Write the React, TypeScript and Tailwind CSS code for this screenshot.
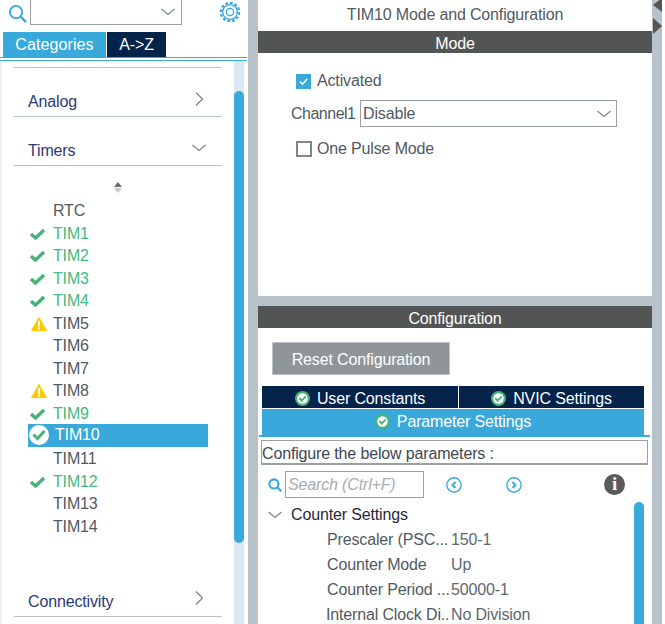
const GRAY = 'bg-[#b7c2c9]';

function Chevron({ dir = 'down' }: { dir?: 'down' | 'right' }) {
  return (
    <svg viewBox="0 0 14 14" className="w-[14px] h-[14px] shrink-0" fill="none" stroke="#7d868c" strokeWidth="1.3">
      {dir === 'down' ? <path d="M0.5 4 L7 9.5 L13.5 4" /> : <path d="M4 0.5 L10.5 7 L4 13.5" />}
    </svg>
  );
}

function Check() {
  return (
    <svg viewBox="0 0 15 12" className="w-[15px] h-[12px]">
      <path d="M1 6 L5.5 10 L14 2" fill="none" stroke="#48b27a" strokeWidth="3.4" />
    </svg>
  );
}

function Warn() {
  return (
    <svg viewBox="0 0 16 14" className="w-4 h-[14px] ml-[1px]">
      <path d="M8 0.5 L15.5 13.5 L0.5 13.5 Z" fill="#ffcc00" stroke="#ffcc00" strokeLinejoin="round" />
      <rect x="7" y="4" width="2" height="5.5" fill="#fff" />
      <rect x="7" y="10.5" width="2" height="2" fill="#fff" />
    </svg>
  );
}

function TabCheck() {
  return (
    <svg viewBox="0 0 16 16" className="w-[15px] h-[15px] shrink-0">
      <circle cx="8" cy="8" r="8" fill="#48b27a" />
      <circle cx="8" cy="8" r="5.6" fill="#fff" />
      <path d="M4.5 7.5 L7.2 10.2 L11.5 5.8" fill="none" stroke="#48b27a" strokeWidth="2" />
    </svg>
  );
}

type Status = 'ok' | 'warn' | 'none';
const timers: { name: string; status: Status }[] = [
  { name: 'RTC', status: 'none' },
  { name: 'TIM1', status: 'ok' },
  { name: 'TIM2', status: 'ok' },
  { name: 'TIM3', status: 'ok' },
  { name: 'TIM4', status: 'ok' },
  { name: 'TIM5', status: 'warn' },
  { name: 'TIM6', status: 'none' },
  { name: 'TIM7', status: 'none' },
  { name: 'TIM8', status: 'warn' },
  { name: 'TIM9', status: 'ok' },
];

function TimerRow({ name, status }: { name: string; status: Status }) {
  return (
    <div className="flex items-center h-[22.5px]">
      <div className="w-[39px] pl-[16px] flex items-center shrink-0">
        {status === 'ok' && <Check />}
        {status === 'warn' && <Warn />}
      </div>
      <span className={status === 'ok' ? 'text-[#45b981]' : 'text-[#4f5a63]'}>{name}</span>
    </div>
  );
}

function Category({ label, open }: { label: string; open?: boolean }) {
  return (
    <div className="flex items-center justify-between h-[25px] w-[208px] border-b border-[#b7c2c9] pl-[14px] pr-[16px] pb-[4px] text-[#2b3a75]">
      <span>{label}</span>
      <div className="mb-[7px]">
        <Chevron dir={open ? 'down' : 'right'} />
      </div>
    </div>
  );
}

function Param({ label, value, tight }: { label: string; value: string; tight?: boolean }) {
  return (
    <div className="flex items-center h-[25px] text-[#4f5a63]">
      <span className={`w-[190px] whitespace-nowrap ${tight ? 'pl-[65px]' : 'pl-[66px]'}`}>{label}</span>
      <span className="text-[#5e6870] whitespace-nowrap">{value}</span>
    </div>
  );
}

export default function App() {
  return (
    <div className="w-[665px] h-[624px] flex overflow-hidden bg-white font-['Liberation_Sans',Arial,sans-serif] text-[16px] tracking-[-0.15px]">
      {/* left panel */}
      <div className="w-[248px] h-full bg-white flex flex-col shrink-0">
        <div className="flex items-start h-[32px] pl-[8px]">
          <svg viewBox="0 0 20 20" className="w-[19px] h-[19px] mt-[4px]">
            <circle cx="8.5" cy="8.5" r="6.5" fill="none" stroke="#39a9dc" strokeWidth="2" />
            <path d="M13.5 13.5 L19 19" stroke="#39a9dc" strokeWidth="2.5" />
          </svg>
          <div className="w-[152px] h-[26px] ml-[3px] -mt-px border border-[#9aa1a6] flex items-center justify-end pr-[6px]">
            <Chevron />
          </div>
          <svg viewBox="0 0 24 24" className="w-[22px] h-[22px] ml-[37px] mt-[1px]" fill="none" stroke="#39a9dc">
            <circle cx="12" cy="12" r="4" strokeWidth="1.5" />
            <circle cx="12" cy="12" r="8" strokeWidth="1.5" />
            <circle cx="12" cy="12" r="10" strokeWidth="2.5" strokeDasharray="3 2.2" />
          </svg>
        </div>
        <div className="flex h-[25px] pl-[3px] gap-px">
          <div className="w-[103px] bg-[#39a9dc] text-white flex items-center justify-center tracking-[0.1px]">Categories</div>
          <div className="w-[59px] bg-[#03234b] text-white flex items-center justify-center">A-&gt;Z</div>
        </div>
        <div className="h-[4px] border-y border-[#39a9dc] mr-[1px] bg-white" />
        <div className="flex-1 flex min-h-0">
          <div className="w-[2px] bg-[#f0f0f0]" />
          <div className="w-[232px] pl-[12px] flex flex-col pt-[6px]">
            <div className="h-px bg-[#b7c2c9] w-[208px]" />
            <div className="mt-[24px]"><Category label="Analog" /></div>
            <div className="mt-[24px]"><Category label="Timers" open /></div>
            <div className="h-[33.8px] w-[208px] flex flex-col items-center pt-[16px] gap-[1px]">
              <div className="w-0 h-0 border-x-[4px] border-x-transparent border-b-[5px] border-b-[#6a6a6a]" />
              <div className="w-0 h-0 border-x-[4px] border-x-transparent border-t-[5px] border-t-[#c8c8c8]" />
            </div>
            <div className="flex flex-col">
              {timers.map((t) => (
                <TimerRow key={t.name} name={t.name} status={t.status} />
              ))}
              <div className="flex items-center h-[23px] w-[180px] ml-[14px] -mt-[1px] mb-[1px] bg-[#39a9dc] text-white">
                <svg viewBox="0 0 20 20" className="w-[20px] h-[20px] ml-[1px] mr-[6px] shrink-0">
                  <circle cx="10" cy="10" r="10" fill="#fff" />
                  <path d="M4.5 9.5 L8.5 13.5 L15.5 6" fill="none" stroke="#48b27a" strokeWidth="3" />
                </svg>
                <span>TIM10</span>
              </div>
              <TimerRow name="TIM11" status="none" />
              <TimerRow name="TIM12" status="ok" />
              <TimerRow name="TIM13" status="none" />
              <TimerRow name="TIM14" status="none" />
            </div>
            <div className="mt-[54.2px]"><Category label="Connectivity" /></div>
          </div>
          <div className="w-[10px] bg-[#d8e8f5] flex flex-col">
            <div className="mt-[30px] h-[452px] bg-[#39a9dc] rounded-full" />
          </div>
        </div>
      </div>

      <div className={`w-[10px] h-full shrink-0 ${GRAY}`} />

      {/* right panel */}
      <div className={`w-[394px] flex flex-col shrink-0 ${GRAY}`}>
        <div className="h-[296px] bg-white text-[#4f5a63]">
          <div className="h-[31px] flex items-center justify-center pb-[2px]">TIM10 Mode and Configuration</div>
          <div className="h-[22px] bg-[#535554] text-white flex items-center justify-center pt-[3px]">Mode</div>
          <div className="pl-[33px] pt-[18px] flex flex-col">
            <label className="flex items-center gap-[6px] h-[20px] pl-[5px]">
              <span className="w-[15px] h-[15px] bg-[#39a9dc] flex items-center justify-center">
                <svg viewBox="0 0 12 12" className="w-[11px] h-[11px]"><path d="M2 6 L5 9 L10 3" fill="none" stroke="#fff" strokeWidth="1.6" /></svg>
              </span>
              Activated
            </label>
            <div className="flex items-center mt-[9px]">
              <span className="w-[69px] pt-[1px] tracking-[-0.5px]">Channel1</span>
              <div className="w-[257px] h-[27px] border border-[#9aa1a6] flex items-center justify-between pl-[2px] pr-[5px] pt-[1px]">
                Disable
                <Chevron />
              </div>
            </div>
            <label className="flex items-center gap-[5px] h-[20px] pl-[5px] mt-[12px]">
              <span className="w-[16px] h-[16px] border-2 border-[#7d868c] bg-white" />
              One Pulse Mode
            </label>
          </div>
        </div>
        <div className="h-[10px] shrink-0" />
        <div className="flex-1 bg-white flex flex-col text-[#4f5a63] min-h-0">
          <div className="h-[22px] bg-[#535554] text-white flex items-center justify-center shrink-0 pt-[3px]">Configuration</div>
          <div className="pl-[14px] pt-[14px] shrink-0">
            <div className="w-[178px] h-[33px] bg-[#90959a] border border-[#b7c2c9] text-white flex items-center justify-center pt-[2px]">Reset Configuration</div>
          </div>
          <div className="mx-[4px] mt-[11px] w-[382px] shrink-0">
            <div className="flex h-[22px] gap-px">
              <div className="w-[196px] bg-[#03234b] text-white flex items-center justify-center gap-[7px] pt-[3px]"><TabCheck />User Constants</div>
              <div className="flex-1 bg-[#03234b] text-white flex items-center justify-center gap-[7px] pt-[3px]"><TabCheck />NVIC Settings</div>
            </div>
            <div className="h-[27px] mt-px bg-[#39a9dc] text-white flex items-center justify-center gap-[7px] pb-[2px]"><TabCheck />Parameter Settings</div>
          </div>
          <div className="ml-[1px] w-[391px] h-[2px] bg-[#39a9dc] -mt-[1px] shrink-0" />
          <div className="flex-1 flex flex-col min-h-0 ml-[3px] mr-[4px]">
            <div className="h-[25px] mt-[3px] border border-[#9aa1a6] border-b-2 flex items-center pt-[3px] text-[#3d4850] shrink-0">Configure the below parameters :</div>
            <div className="flex items-center h-[33px] mt-[3px] pl-[7px] shrink-0">
              <svg viewBox="0 0 20 20" className="w-[14px] h-[14px] shrink-0">
                <circle cx="8.5" cy="8.5" r="6.5" fill="none" stroke="#39a9dc" strokeWidth="3" />
                <path d="M13.5 13.5 L19 19" stroke="#39a9dc" strokeWidth="3" />
              </svg>
              <div className="w-[139px] h-[27px] ml-[3px] border border-[#9aa1a6] flex items-center pl-[2px] italic text-[#a8adb2] shrink-0">Search (Ctrl+F)</div>
              <svg viewBox="0 0 16 16" className="w-[16px] h-[16px] ml-[22px] shrink-0" fill="none" stroke="#39a9dc">
                <circle cx="8" cy="8" r="7.2" strokeWidth="1.4" />
                <path d="M9.5 5 L6.5 8 L9.5 11" strokeWidth="2" />
              </svg>
              <svg viewBox="0 0 16 16" className="w-[16px] h-[16px] ml-[44px] shrink-0" fill="none" stroke="#39a9dc">
                <circle cx="8" cy="8" r="7.2" strokeWidth="1.4" />
                <path d="M6.5 5 L9.5 8 L6.5 11" strokeWidth="2" />
              </svg>
              <div className="w-[21px] h-[21px] ml-[82px] rounded-full bg-[#5b5b5b] text-white font-['Liberation_Serif',serif] font-bold text-[19px] flex items-center justify-center shrink-0">i</div>
            </div>
            <div className="flex flex-1 min-h-0 mt-[1px]">
              <div className="flex-1">
                <div className="flex items-center h-[25px] pl-[7px] text-[#1f2a3a]">
                  <Chevron />
                  <span className="ml-[9px]">Counter Settings</span>
                </div>
                <Param label="Prescaler (PSC..." value="150-1" />
                <Param label="Counter Mode" value="Up" />
                <Param label="Counter Period ..." value="50000-1" />
                <Param label="Internal Clock Di.." value="No Division" tight />
              </div>
              <div className="w-[10px] mr-[4px] bg-[#39a9dc] rounded-t-full" />
            </div>
          </div>
        </div>
      </div>

      {/* gray strip at the right with the sash arrows */}
      <div className={`w-[10px] h-full shrink-0 pl-[1px] ${GRAY}`}>
        <div className="w-0 h-0 -mt-[2px] border-y-[7px] border-y-transparent border-r-[9px] border-r-[#555555]" />
        <div className="mt-[6px] w-0 h-0 border-y-[8px] border-y-transparent border-l-[9px] border-l-[#555555]" />
      </div>
    </div>
  );
}
